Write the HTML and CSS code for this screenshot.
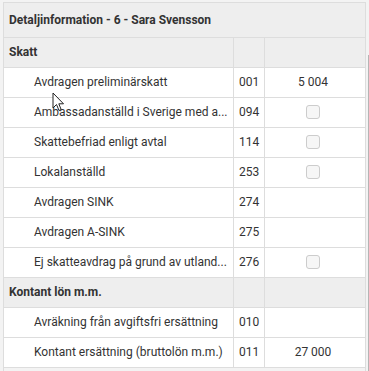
FILE: index.html
```html
<!DOCTYPE html>
<html lang="sv">
<head>
    <meta charset="UTF-8">
    <meta name="viewport" content="width=device-width, initial-scale=1.0">
    <title>Detaljinformation</title>
    <link rel="stylesheet" href="styles.css">
</head>
<body>
    <div class="frame">
        <div class="panel">
            <div class="panel-title">Detaljinformation - 6 - Sara Svensson</div>
            <table class="detail">
                <colgroup>
                    <col class="col-name">
                    <col class="col-code">
                    <col class="col-value">
                </colgroup>
                <tr class="section"><td>Skatt</td><td></td><td></td></tr>
                <tr><td>Avdragen preliminärskatt</td><td>001</td><td>5 004</td></tr>
                <tr><td title="Ambassadanställd i Sverige med avtal om skattefrihet">Ambassadanställd i Sverige med a...</td><td>094</td><td><span class="check"></span></td></tr>
                <tr><td>Skattebefriad enligt avtal</td><td>114</td><td><span class="check"></span></td></tr>
                <tr><td>Lokalanställd</td><td>253</td><td><span class="check"></span></td></tr>
                <tr><td>Avdragen SINK</td><td>274</td><td></td></tr>
                <tr><td>Avdragen A-SINK</td><td>275</td><td></td></tr>
                <tr><td title="Ej skatteavdrag på grund av utlandstjänst">Ej skatteavdrag på grund av utland...</td><td>276</td><td><span class="check"></span></td></tr>
                <tr class="section"><td>Kontant lön m.m.</td><td></td><td></td></tr>
                <tr><td>Avräkning från avgiftsfri ersättning</td><td>010</td><td></td></tr>
                <tr><td>Kontant ersättning (bruttolön m.m.)</td><td>011</td><td>27 000</td></tr>
                <tr class="last"><td></td><td></td><td></td></tr>
            </table>
        </div>
        <div class="scroll-track"><div class="scroll-thumb"></div></div>
    </div>

    <!-- mouse pointer over the list -->
    <svg class="pointer" width="13" height="21" viewBox="0 0 13 21">
        <path d="M1 1 L1 16 L4.5 12.5 L7 18.5 L9.2 17.6 L6.8 11.8 L11.5 11.8 Z" fill="#fff" stroke="#222" stroke-width="1" stroke-linejoin="round"/>
    </svg>
</body>
</html>
```

FILE: styles.css
```css
html, body {
    height: 100%;
}

body {
    margin: 0;
    overflow: hidden;
    background: #f3f3f3;
    font-family: Roboto, "Liberation Sans", Arial, sans-serif;
    font-size: 12px;
    color: #333333;
    position: relative;
}

.frame {
    display: flex;
    height: 100%;
    padding: 2px 0 0 3px;
    box-sizing: border-box;
    overflow: hidden;
}

.panel {
    width: 361px;
    border-top: 1px solid #dddddd;
    border-left: 1px solid #dddddd;
    border-right: 1px solid #dddddd;
}

.panel-title {
    height: 34px;
    line-height: 34px;
    padding-left: 5px;
    background: #eeeeee;
    font-weight: 700;
    border-bottom: 1px solid #dddddd;
}

.detail {
    width: 361px;
    table-layout: fixed;
    border-collapse: separate;
    border-spacing: 0;
    background: #ffffff;
}

.col-name { width: 229px; }
.col-code { width: 31px; }
.col-value { width: 101px; }

.detail td {
    line-height: 29px;
    padding: 0;
    border-bottom: 1px solid #dddddd;
    white-space: nowrap;
    overflow: hidden;
}

.detail td:first-child {
    padding: 0 6px 0 30px;
}

.detail td + td {
    border-left: 1px solid #dddddd;
}

.detail td:nth-child(2) {
    padding-left: 5px;
}

.detail td:nth-child(3) {
    text-align: center;
    padding-right: 4px;
}

.detail .section td {
    background: #eeeeee;
    font-weight: 700;
}

.detail .section td:first-child {
    padding-left: 5px;
}

.detail .last td {
    line-height: 8px;
    border-bottom: 0;
}

.check {
    display: inline-block;
    width: 12px;
    height: 12px;
    border: 1px solid #cccccc;
    border-radius: 3px;
    background: #f6f6f6;
    vertical-align: middle;
    margin-top: -2px;
}

.scroll-track {
    width: 4px;
    padding-top: 53px;
}

.scroll-thumb {
    margin-left: 2px;
    width: 2px;
    height: 400px;
    background: #b5b5b5;
}

.pointer {
    position: absolute;
    left: 52px;
    top: 92px;
}
```
